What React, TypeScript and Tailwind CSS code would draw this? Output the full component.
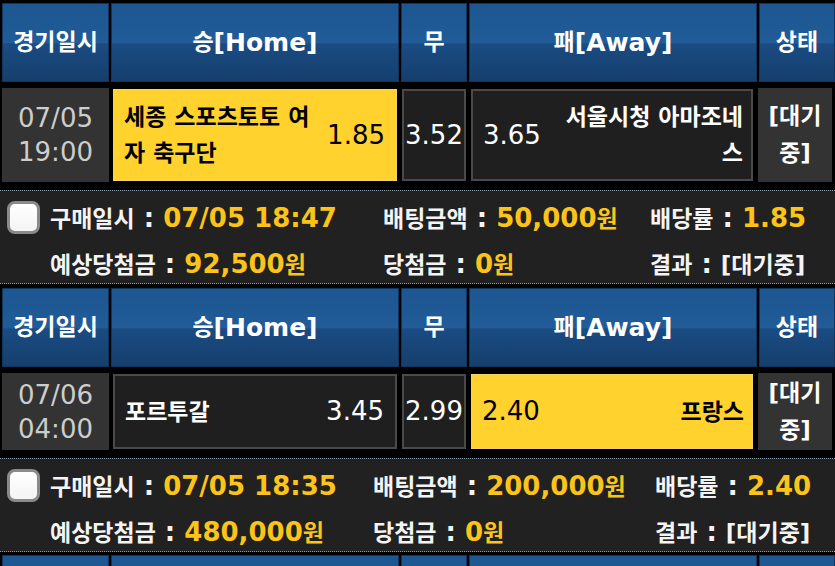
import React from "react";

const K = ({ children, c = "text-[23px]" }: { children: React.ReactNode; c?: string }) => (
  <span className={c}>{children}</span>
);

const hcell =
  "flex items-center justify-center border border-[#0f3560] bg-[linear-gradient(to_bottom,#1d5691_0%,#215c98_50%,#1a4b82_52%,#153f6d_100%)] text-white font-bold text-[25px]";

function Header() {
  return (
    <div className="flex h-[79px] shrink-0">
      <div className={`${hcell} ml-[2px] w-[107px]`}>
        <K>경기일시</K>
      </div>
      <div className={`${hcell} ml-[2px] w-[288px]`}>
        <K>승</K>[Home]
      </div>
      <div className={`${hcell} ml-[2px] w-[66px]`}>
        <K>무</K>
      </div>
      <div className={`${hcell} ml-[2px] w-[288px]`}>
        <K>패</K>[Away]
      </div>
      <div className={`${hcell} ml-[2px] w-[76px]`}>
        <K>상태</K>
      </div>
    </div>
  );
}

type Match = {
  date: string;
  time: string;
  home: string;
  homeOdd: string;
  draw: string;
  away: string;
  awayOdd: string;
  pick: "home" | "away";
  rowH: string;
};

function Row({ m }: { m: Match }) {
  const yellow = "bg-[#ffd22e] border border-[#f3d468] text-black";
  const dark = "bg-[#1f1f1f] border-2 border-[#4a4a4a] text-white";
  return (
    <div className={`flex shrink-0 mt-[6px] text-[26px] ${m.rowH}`}>
      <div className="ml-[2px] w-[107px] bg-[#333333] flex flex-col items-center justify-center leading-[34px] text-[#cdcdcd]">
        <div>{m.date}</div>
        <div>{m.time}</div>
      </div>
      <div className="ml-[2px] w-[288px] flex">
        <div
          className={`flex-1 mx-[2px] my-[1px] flex items-center justify-between pl-[10px] pr-[11px] ${
            m.pick === "home" ? yellow : dark
          }`}
        >
          <div className="w-[196px] font-bold text-[23px] leading-[36px]">{m.home}</div>
          <div className="shrink-0">{m.homeOdd}</div>
        </div>
      </div>
      <div className="ml-[2px] w-[66px] flex">
        <div className={`flex-1 mx-[1px] my-[1px] flex items-center justify-center ${dark}`}>{m.draw}</div>
      </div>
      <div className="ml-[2px] w-[288px] flex">
        <div
          className={`flex-1 ml-[2px] mr-[4px] my-[1px] flex items-center justify-between pl-[10px] pr-[8px] ${
            m.pick === "away" ? yellow : dark
          }`}
        >
          <div className="shrink-0">{m.awayOdd}</div>
          <div className="w-[182px] text-right font-bold text-[23px] leading-[36px]">{m.away}</div>
        </div>
      </div>
      <div className="ml-[1px] w-[74px] bg-[#333333] flex items-center justify-center text-center text-white font-bold text-[23px] leading-[37px] px-[4px]">
        [대기 중]
      </div>
    </div>
  );
}

function Checkbox() {
  return (
    <div className="w-[33px] h-[33px] rounded-[8px] border-[3px] border-[#8a8a8a] bg-[linear-gradient(to_bottom,#ffffff_0%,#f4f4f4_100%)]" />
  );
}

function Item({ label, value, white }: { label: string; value: React.ReactNode; white?: boolean }) {
  return (
    <div className="whitespace-nowrap">
      <K>{label}</K> : <span className={white ? "text-[#f4f4f4]" : "text-[#fcc419]"}>{value}</span>
    </div>
  );
}

function Info({
  cols,
  buy,
  bet,
  rate,
  expect,
}: {
  cols: string;
  buy: string;
  bet: string;
  rate: string;
  expect: string;
}) {
  return (
    <div className="shrink-0 mt-[8px] h-[94px] bg-[#212121] border-y border-dotted border-[#8d9dab] flex">
      <div className="w-[50px] pl-[7px] pt-[10px] shrink-0">
        <Checkbox />
      </div>
      <div className={`grid ${cols} grid-rows-[55px_37px] items-center font-bold text-[#f4f4f4] text-[26px]`}>
        <Item label="구매일시" value={buy} />
        <Item
          label="배팅금액"
          value={
            <>
              {bet}
              <K>원</K>
            </>
          }
        />
        <Item label="배당률" value={rate} />
        <Item
          label="예상당첨금"
          value={
            <>
              {expect}
              <K>원</K>
            </>
          }
        />
        <Item
          label="당첨금"
          value={
            <>
              0<K>원</K>
            </>
          }
        />
        <Item label="결과" value={<K>[대기중]</K>} white />
      </div>
    </div>
  );
}

export default function App() {
  const m1: Match = {
    date: "07/05",
    time: "19:00",
    home: "세종 스포츠토토 여자 축구단",
    homeOdd: "1.85",
    draw: "3.52",
    away: "서울시청 아마조네스",
    awayOdd: "3.65",
    pick: "home",
    rowH: "h-[94px]",
  };
  const m2: Match = {
    date: "07/06",
    time: "04:00",
    home: "포르투갈",
    homeOdd: "3.45",
    draw: "2.99",
    away: "프랑스",
    awayOdd: "2.40",
    pick: "away",
    rowH: "h-[77px]",
  };
  return (
    <div className="w-[835px] h-[566px] overflow-hidden bg-black pt-[3px] flex flex-col font-[family-name:'DejaVu_Sans','Noto_Sans_CJK_KR',sans-serif]">
      <Header />
      <Row m={m1} />
      <Info cols="grid-cols-[333px_267px_1fr]" buy="07/05 18:47" bet="50,000" rate="1.85" expect="92,500" />
      <div className="mt-[4px] shrink-0">
        <Header />
      </div>
      <Row m={m2} />
      <Info cols="grid-cols-[323px_282px_1fr]" buy="07/05 18:35" bet="200,000" rate="2.40" expect="480,000" />
      <div className="mt-[3px] shrink-0">
        <Header />
      </div>
    </div>
  );
}
